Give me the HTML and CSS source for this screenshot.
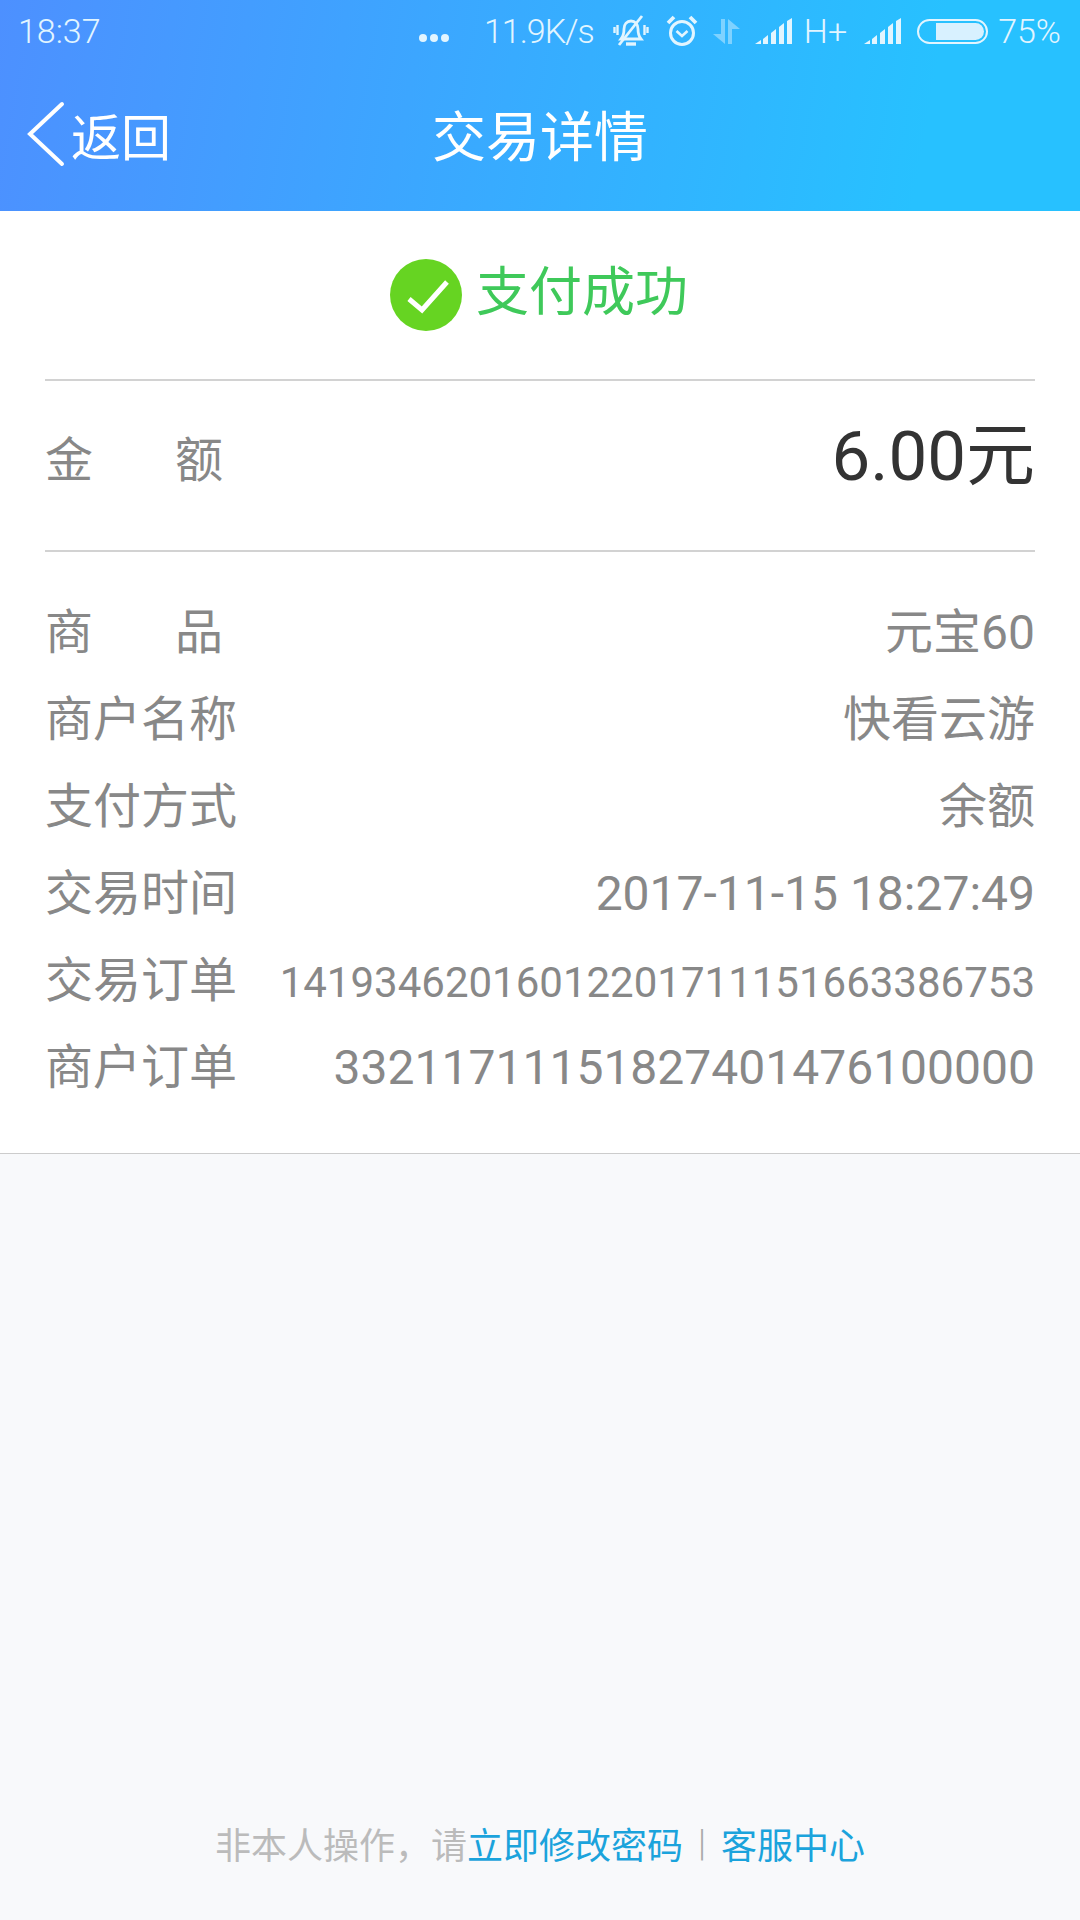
FILE: index.html
```html
<!DOCTYPE html>
<html lang="zh-CN">
<head>
  <meta charset="UTF-8">
  <title>交易详情</title>
  <link rel="stylesheet" href="styles.css">
</head>
<body>
  <header class="top">
    <div class="statusbar">
      <span class="time">18:37</span>
      <div class="status-right">
        <svg class="dots" width="32" height="10" viewBox="0 0 32 10"><circle cx="5" cy="5" r="4"/><circle cx="16" cy="5" r="4"/><circle cx="27" cy="5" r="4"/></svg>
        <span class="speed">11.9K/s</span>
        <svg class="ic-bell" width="36" height="34" viewBox="0 0 36 34" fill="none" stroke="#e2f5ff" stroke-width="2.800"><path d="M8 25c2.500-3 3-6 3-10 0-5 3-8 7-8s7 3 7 8c0 4 .5 7 3 10z"/><path d="M13 30h10" stroke-width="3.400"/><path d="M4.500 11v10M1.500 13v6M31.500 11v10M34.500 13v6" stroke-width="2.400"/><path d="M6 31L29 2"/></svg>
        <svg class="ic-alarm" width="32" height="32" viewBox="0 0 32 32" fill="none" stroke="#e2f5ff" stroke-width="3"><circle cx="16" cy="18" r="11.500"/><path d="M10.500 16l5.500 5 5.500-5" stroke-width="2.600"/><path d="M2 8l6-6M30 8l-6-6" stroke-width="3.800"/></svg>
        <svg class="ic-data" width="27" height="25" viewBox="0 0 27 25" fill="#7fd2ff"><path d="M8 0h4v25L0 15h8z"/><path d="M15 0v25h4V10h8z"/></svg>
        <svg class="ic-signal" width="38" height="26" viewBox="0 0 38 26" fill="#e2f5ff"><path d="M0 26l6-4v4zM8 21l5-4v9H8zM16 15l5-4v15h-5zM24 9l5-4v21h-5zM32 3l5-3v26h-5z"/></svg>
        <span class="net">H+</span>
        <svg class="ic-signal" width="38" height="26" viewBox="0 0 38 26" fill="#e2f5ff"><path d="M0 26l6-4v4zM8 21l5-4v9H8zM16 15l5-4v15h-5zM24 9l5-4v21h-5zM32 3l5-3v26h-5z"/></svg>
        <div class="battery"><div class="battery-fill"></div></div>
        <span class="pct">75%</span>
      </div>
    </div>
    <div class="navbar">
      <div class="back">
        <svg width="40" height="66" viewBox="0 0 40 66" fill="none" stroke="#fff" stroke-width="4" stroke-linecap="round"><path d="M36 3L4 33l32 30"/></svg>
        <span>返回</span>
      </div>
      <h1 class="title">交易详情</h1>
    </div>
  </header>

  <main class="card">
    <div class="result">
      <svg width="72" height="72" viewBox="0 0 72 72"><circle cx="36" cy="36" r="36" fill="#66d422"/><path d="M19 40l13 11 25-28" fill="none" stroke="#fff" stroke-width="5"/></svg>
      <span class="result-text">支付成功</span>
    </div>
    <div class="amount">
      <span class="label wide">金额</span>
      <span class="money">6.00元</span>
    </div>
    <div class="rows">
      <div class="row"><span class="label wide">商品</span><span class="val">元宝60</span></div>
      <div class="row"><span class="label">商户名称</span><span class="val">快看云游</span></div>
      <div class="row"><span class="label">支付方式</span><span class="val">余额</span></div>
      <div class="row"><span class="label">交易时间</span><span class="val">2017-11-15 18:27:49</span></div>
      <div class="row"><span class="label">交易订单</span><span class="val small">14193462016012201711151663386753</span></div>
      <div class="row"><span class="label">商户订单</span><span class="val">33211711151827401476100000</span></div>
    </div>
  </main>

  <footer class="foot">
    <span>非本人操作，请</span><a class="link">立即修改密码</a><span class="sep">|</span><a class="link">客服中心</a>
  </footer>
</body>
</html>
```

FILE: styles.css
```css
html, body {
  margin: 0;
  height: 1920px;
}

body {
  width: 1080px;
  display: flex;
  flex-direction: column;
  background-color: #f8f9fb;
  font-family: "Roboto", "Noto Sans CJK SC", sans-serif;
  overflow: hidden;
}

.top {
  height: 211px;
  background: linear-gradient(100deg, #4d90ff 0%, #27c1ff 85%);
  color: #fff;
}

.statusbar {
  height: 62px;
  padding: 0 19px 0 18px;
  display: flex;
  align-items: center;
  justify-content: space-between;
  color: #e2f5ff;
  font-size: 34px;
  font-weight: 300;
}

.status-right {
  display: flex;
  align-items: center;
}

.dots { fill: #e2f5ff; margin-right: 34px; margin-top: 14px; }
.speed { margin-right: 19px; font-size: 34px; letter-spacing: -1px; }
.ic-bell { margin-right: 17px; }
.ic-alarm { margin-right: 15px; }
.ic-data { margin-right: 15px; }
.net { margin: 0 17px 0 11px; font-size: 34px; }
.pct { font-size: 34px; }

.battery {
  width: 71px;
  height: 25px;
  margin: 0 10px 0 15px;
  padding: 2px 2px 2px 17px;
  box-sizing: border-box;
  border: 2px solid #e2f5ff;
  border-radius: 13px;
}

.battery-fill {
  height: 100%;
  background-color: #d8f1ff;
  border-radius: 0 9px 9px 0;
}

.navbar {
  height: 149px;
  padding-bottom: 6px;
  box-sizing: border-box;
  position: relative;
  display: flex;
  align-items: center;
  justify-content: center;
}

.back {
  position: absolute;
  left: 26px;
  top: 36px;
  display: flex;
  align-items: center;
  gap: 5px;
  font-size: 50px;
}

.title {
  margin: 0;
  font-size: 54px;
  font-weight: 400;
}

.card {
  background-color: #fff;
  border-bottom: 1px solid #ccc;
  padding: 0 45px;
  box-sizing: border-box;
  height: 943px;
}

.result {
  height: 170px;
  padding-right: 2px;
  box-sizing: border-box;
  display: flex;
  align-items: center;
  justify-content: center;
  gap: 14px;
  color: #3fc95a;
  font-size: 53px;
  border-bottom: 2px solid #d2d2d2;
}

.result-text {
  margin-bottom: 15px;
}

.amount {
  height: 171px;
  box-sizing: border-box;
  padding-bottom: 19px;
  display: flex;
  align-items: center;
  justify-content: space-between;
  border-bottom: 2px solid #d2d2d2;
}

.label {
  font-size: 48px;
  color: #888;
}

.label.wide {
  width: 178px;
  text-align: justify;
  text-align-last: justify;
}

.money {
  font-size: 69px;
  color: #333;
  margin-bottom: 12px;
}

.rows {
  padding-top: 41px;
}

.row {
  height: 87px;
  display: flex;
  align-items: baseline;
  justify-content: space-between;
}

.val {
  font-size: 48px;
  color: #888;
}

.val.small {
  font-size: 42px;
}

.foot {
  margin-top: auto;
  padding-bottom: 51px;
  display: flex;
  justify-content: center;
  align-items: center;
  font-size: 36px;
  color: #bbb;
}

.link {
  color: #1ba3dc;
}

.sep {
  margin: 0 15px;
  font-weight: 300;
  color: #aaa;
}
```
